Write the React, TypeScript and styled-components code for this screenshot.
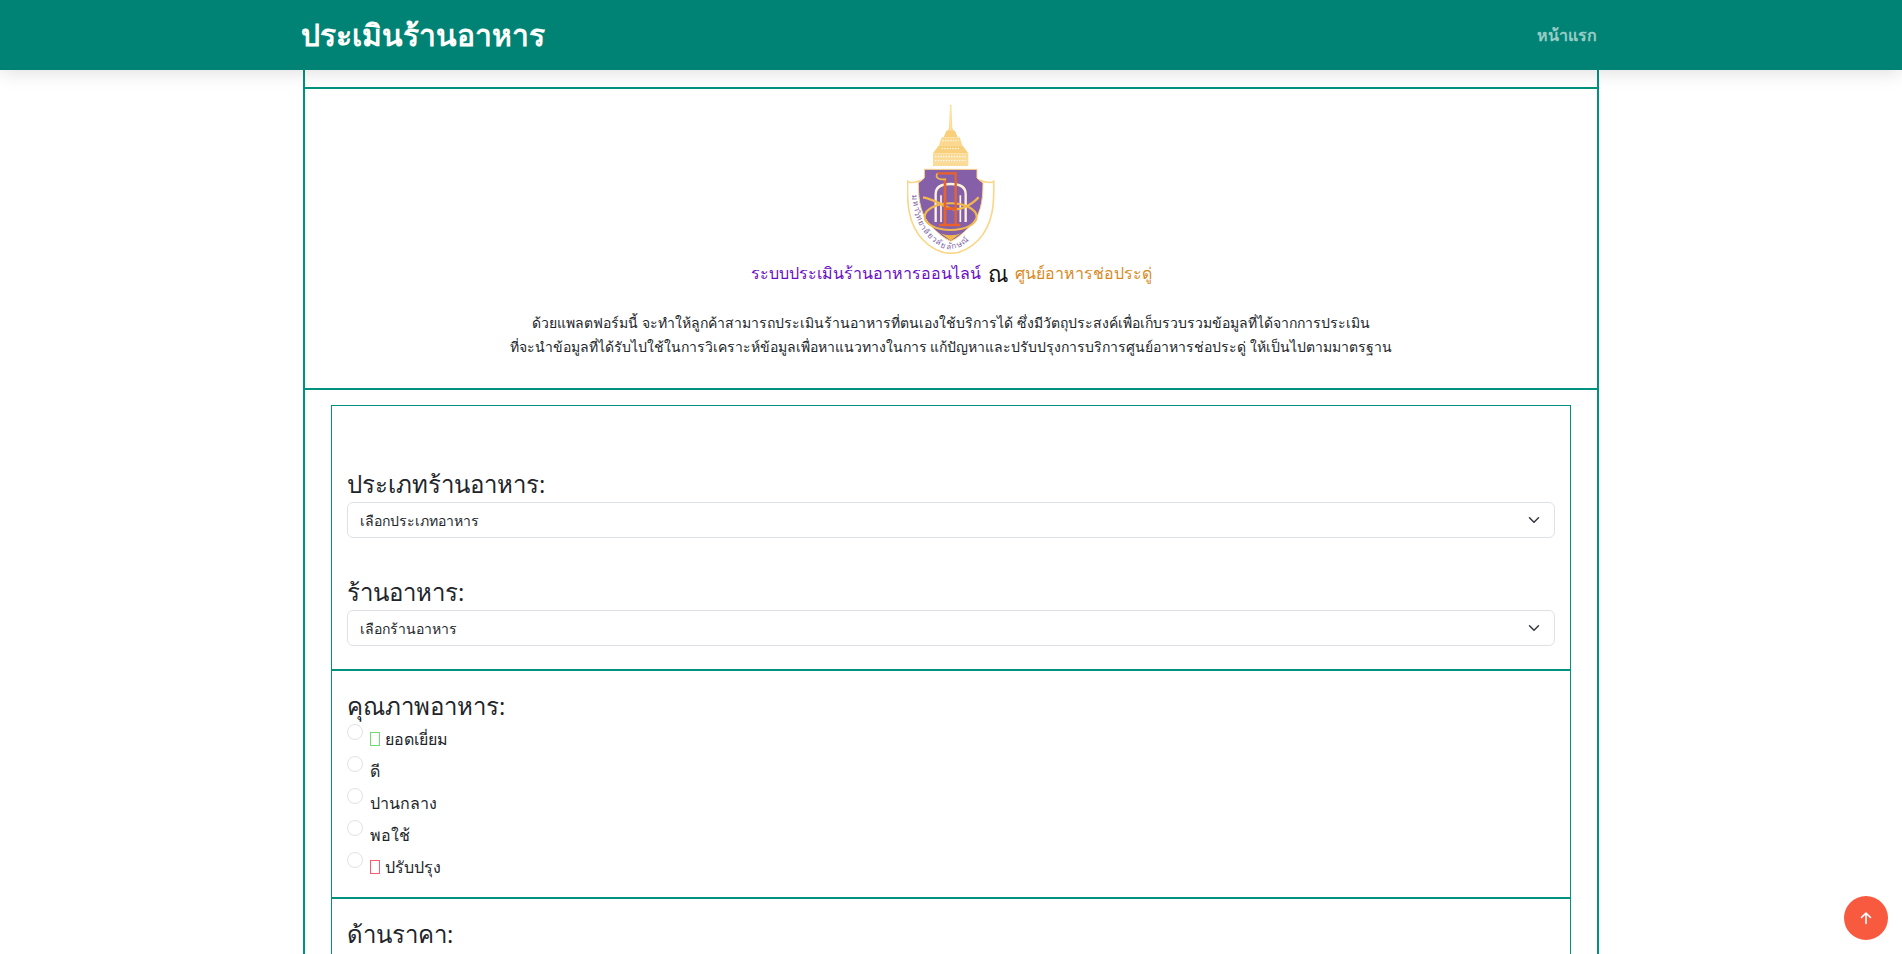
import React from "react";
import styled, { createGlobalStyle } from "styled-components";

const FONT = `"Open Sans", "Noto Sans", "Noto Sans CJK SC", sans-serif`;
const TEAL = "#008374";
const LINE = "#00917f";

const Global = createGlobalStyle`
  * { box-sizing: border-box; }
  html, body { margin: 0; padding: 0; height: 954px; overflow: hidden; background: #fff; }
  body { font-family: ${FONT}; font-size: 16px; color: #212529; }
`;

const Page = styled.div`
  height: 954px;
  overflow: hidden;
  display: flex;
  flex-direction: column;
`;

const Header = styled.header`
  flex: none;
  height: 70px;
  background: ${TEAL};
  box-shadow: 0 0 20px rgba(0, 0, 0, 0.16);
  position: relative;
  z-index: 5;
`;

const HeaderInner = styled.div`
  width: 1296px;
  height: 100%;
  margin: 0 auto;
  display: flex;
  align-items: center;
  justify-content: space-between;
`;

const Brand = styled.h1`
  margin: 0 0 0 -2px;
  color: #fff;
  font-size: 30px;
  font-weight: 700;
`;

const NavLink = styled.a`
  color: rgba(255, 255, 255, 0.6);
  font-size: 16px;
  font-weight: 600;
  margin-right: 2px;
`;

const Frame = styled.main`
  flex: 1;
  width: 1296px;
  margin: 0 auto;
  padding-top: 17px;
  border-left: 2px solid ${LINE};
  border-right: 2px solid ${LINE};
`;

const Intro = styled.section`
  border-top: 2px solid ${LINE};
  border-bottom: 2px solid ${LINE};
  height: 303px;
  padding-top: 15px;
  display: flex;
  flex-direction: column;
  align-items: center;
`;

const LogoSvg = styled.svg`
  display: block;
  width: 88px;
  height: 150px;
`;

const Tagline = styled.div`
  margin-top: 5px;
  display: flex;
  align-items: center;
  gap: 7px;
  font-size: 16px;
  line-height: 28px;
`;

const Tint = styled.span<{ $color: string }>`
  color: ${(p) => p.$color};
`;

const At = styled.span`
  font-size: 22px;
  color: #111;
`;

const Lead = styled.p`
  margin: 24px 0 0;
  text-align: center;
  font-size: 14px;
  line-height: 24px;
  color: #212529;
`;

const FormBox = styled.form`
  margin: 15px 26px 0;
  border: 1px solid ${LINE};
  height: 600px;
`;

const Group = styled.div<{ $top: number; $height: number; $line?: boolean }>`
  height: ${(p) => p.$height}px;
  padding: ${(p) => p.$top}px 15px 0;
  border-bottom: ${(p) => (p.$line ? `2px solid ${LINE}` : "none")};
`;

const Label = styled.label`
  display: block;
  font-size: 24px;
  line-height: 36px;
  color: #212529;
`;

const Select = styled.select`
  display: block;
  width: 100%;
  height: 36px;
  margin: 0 0 36px;
  padding: 0 36px 0 12px;
  appearance: none;
  background: #fff url("data:image/svg+xml,%3csvg xmlns='http://www.w3.org/2000/svg' viewBox='0 0 16 16'%3e%3cpath fill='none' stroke='%23343a40' stroke-linecap='round' stroke-linejoin='round' stroke-width='2' d='m2 5 6 6 6-6'/%3e%3c/svg%3e") no-repeat right 12px center / 16px 12px;
  border: 1px solid #dee2e6;
  border-radius: 6px;
  font-family: ${FONT};
  font-size: 14px;
  color: #212529;
`;

const Option = styled.label`
  display: flex;
  align-items: flex-start;
  gap: 7px;
  height: 32px;
  font-size: 16px;
  line-height: 26px;
  color: #212529;
`;

const Radio = styled.input.attrs({ type: "radio" })`
  appearance: none;
  flex: none;
  width: 16px;
  height: 16px;
  margin: 0;
  border: 1px solid #dee2e6;
  border-radius: 50%;
  background: #fff;
`;

const OptionText = styled.span`
  display: flex;
  align-items: center;
  gap: 5px;
  padding-top: 2px;
`;

const Tofu = styled.span<{ $color: string }>`
  display: inline-block;
  width: 10px;
  height: 14px;
  border: 1px solid ${(p) => p.$color};
`;

const ScrollTop = styled.a`
  position: fixed;
  right: 14px;
  bottom: 14px;
  width: 44px;
  height: 44px;
  border-radius: 50%;
  background: #f85a40;
  display: flex;
  align-items: center;
  justify-content: center;
  z-index: 10;
`;

const Logo = () => (
  <LogoSvg viewBox="145 42 262 450" aria-label="ตรามหาวิทยาลัยวลัยลักษณ์">
    <path d="M273 44h4l3 70 12 24h-34l12-24z" fill="#fbd88e" />
    <path d="M275 50v70" stroke="#fff3d6" strokeWidth="1.5" />
    <path d="M262 122h26l8 20h-42z" fill="#f8cf7b" />
    <path d="M248 142h54l8 24h-70z" fill="#fbd88e" />
    <path d="M240 166h70l18 24h-106z" fill="#f8cf7b" />
    <path d="M222 190h106v38h-106z" fill="#fbdb98" />
    <path d="M228 200h94M228 212h94M250 152h50M248 176h54" stroke="#fff" strokeWidth="3" strokeDasharray="4 4" />
    <path
      d="M196 268c-20 8-42 12-50 6-2 62 0 128 46 176 24 24 54 40 83 40s59-16 83-40c46-48 48-114 46-176-8 6-30 2-50-6z"
      fill="#fff"
      stroke="#fbd68a"
      strokeWidth="5"
    />
    <path
      d="M196 238h158v26c8 8 14 12 18 14 0 60-8 100-42 134-18 18-36 34-55 42-19-8-37-24-55-42-34-34-42-74-42-134 4-2 10-6 18-14z"
      fill="#8560a8"
      stroke="#fbd68a"
      strokeWidth="3"
    />
    <path d="M230 396V312c0-22 20-30 45-30s45 8 45 30v84" fill="none" stroke="#fff3dc" strokeWidth="7" />
    <path d="M246 396V316M304 396V316" stroke="#fff3dc" strokeWidth="5" />
    <ellipse cx="275" cy="380" rx="78" ry="40" fill="none" stroke="#f2b84c" strokeWidth="6" />
    <path d="M192 322c30 4 60 26 83 34s60-8 84-34" fill="none" stroke="#f2b84c" strokeWidth="7" />
    <path d="M235 250h55v155" fill="none" stroke="#e8622a" strokeWidth="7" />
    <path d="M258 265v140h34M262 356h30M240 405h64" fill="none" stroke="#e8622a" strokeWidth="8" />
    <path d="M235 250c-6 10 0 18 12 18h14" fill="none" stroke="#f2b84c" strokeWidth="5" />
    <path d="M245 430c14 8 46 8 60 0l-30 22z" fill="#f2b84c" />
    <defs>
      <path id="logo-ring" d="M160 300c2 60 8 100 46 140 24 24 46 36 69 38 23-2 45-14 69-38 38-40 44-80 46-140" />
    </defs>
    <text fontSize="24" fill="#7a5aa0" fontFamily={FONT} letterSpacing="3">
      <textPath href="#logo-ring" startOffset="3%">มหาวิทยาลัยวลัยลักษณ์</textPath>
    </text>
  </LogoSvg>
);

const options: { text: string; tofu?: string }[] = [
  { text: "ยอดเยี่ยม", tofu: "#6fdc6f" },
  { text: "ดี" },
  { text: "ปานกลาง" },
  { text: "พอใช้" },
  { text: "ปรับปรุง", tofu: "#ff5a6e" },
];

export default function App() {
  return (
    <Page>
      <Global />
      <Header>
        <HeaderInner>
          <Brand>ประเมินร้านอาหาร</Brand>
          <NavLink>หน้าแรก</NavLink>
        </HeaderInner>
      </Header>
      <Frame>
        <Intro>
          <Logo />
          <Tagline>
            <Tint $color="#6a0dc4">ระบบประเมินร้านอาหารออนไลน์</Tint>
            <At>ณ</At>
            <Tint $color="#d98a1f">ศูนย์อาหารช่อประดู่</Tint>
          </Tagline>
          <Lead>
            ด้วยแพลตฟอร์มนี้ จะทำให้ลูกค้าสามารถประเมินร้านอาหารที่ตนเองใช้บริการได้ ซึ่งมีวัตถุประสงค์เพื่อเก็บรวบรวมข้อมูลที่ได้จากการประเมิน
            <br />
            ที่จะนำข้อมูลที่ได้รับไปใช้ในการวิเคราะห์ข้อมูลเพื่อหาแนวทางในการ แก้ปัญหาและปรับปรุงการบริการศูนย์อาหารช่อประดู่ ให้เป็นไปตามมาตรฐาน
          </Lead>
        </Intro>
        <FormBox>
          <Group $top={60} $height={265} $line>
            <Label>ประเภทร้านอาหาร:</Label>
            <Select defaultValue="">
              <option value="">เลือกประเภทอาหาร</option>
            </Select>
            <Label>ร้านอาหาร:</Label>
            <Select defaultValue="">
              <option value="">เลือกร้านอาหาร</option>
            </Select>
          </Group>
          <Group $top={17} $height={228} $line>
            <Label>คุณภาพอาหาร:</Label>
            {options.map((o) => (
              <Option key={o.text}>
                <Radio name="food" />
                <OptionText>
                  {o.tofu && <Tofu $color={o.tofu} />}
                  {o.text}
                </OptionText>
              </Option>
            ))}
          </Group>
          <Group $top={17} $height={100}>
            <Label>ด้านราคา:</Label>
          </Group>
        </FormBox>
      </Frame>
      <ScrollTop aria-label="กลับขึ้นด้านบน">
        <svg width="16" height="16" viewBox="0 0 16 16" fill="none" stroke="#fff" strokeWidth="1.6" strokeLinecap="round" strokeLinejoin="round">
          <path d="M8 13.5V3M3.5 7.5 8 3l4.500 4.500" />
        </svg>
      </ScrollTop>
    </Page>
  );
}
